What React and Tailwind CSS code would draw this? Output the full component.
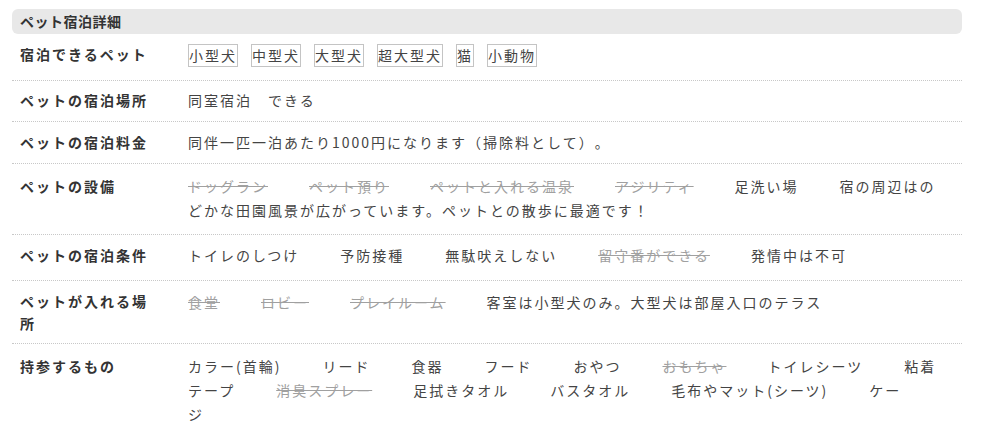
import React from 'react';

const font = { fontFamily: '"Noto Sans CJK JP", "Noto Sans", sans-serif' };

function Item({ text, off }) {
  return <span className={`mr-[41px] ${off ? 'text-[#a0a0a0] line-through' : ''}`}>{text}</span>;
}

function Row({ label, pad, labelClass = 'leading-6', children }) {
  return (
    <div className={`flex border-b border-dotted border-[#c8c8c8] pl-2 pr-3 ${pad}`}>
      <div className={`w-[168px] shrink-0 pr-[28px] font-bold text-[#333] ${labelClass}`}>{label}</div>
      <div className="flex-1 leading-6 text-[#444]">{children}</div>
    </div>
  );
}

export default function App() {
  const pets = ['小型犬', '中型犬', '大型犬', '超大型犬', '猫', '小動物'];

  const facilities = [
    { text: 'ドッグラン', off: true },
    { text: 'ペット預り', off: true },
    { text: 'ペットと入れる温泉', off: true },
    { text: 'アジリティ', off: true },
    { text: '足洗い場' },
    { text: '宿の周辺はのどかな田園風景が広がっています。ペットとの散歩に最適です！' },
  ];

  const conditions = [
    { text: 'トイレのしつけ' },
    { text: '予防接種' },
    { text: '無駄吠えしない' },
    { text: '留守番ができる', off: true },
    { text: '発情中は不可' },
  ];

  const places = [
    { text: '食堂', off: true },
    { text: 'ロビー', off: true },
    { text: 'プレイルーム', off: true },
    { text: '客室は小型犬のみ。大型犬は部屋入口のテラス' },
  ];

  const bring = [
    { text: 'カラー(首輪)' },
    { text: 'リード' },
    { text: '食器' },
    { text: 'フード' },
    { text: 'おやつ' },
    { text: 'おもちゃ', off: true },
    { text: 'トイレシーツ' },
    { text: '粘着テープ' },
    { text: '消臭スプレー', off: true },
    { text: '足拭きタオル' },
    { text: 'バスタオル' },
    { text: '毛布やマット(シーツ)' },
    { text: 'ケージ' },
  ];

  return (
    <div
      className="min-h-screen bg-white pt-[9px] text-[14px] tracking-[2px] [text-spacing-trim:space-all]"
      style={font}
    >
      <div className="ml-3 w-[950px]">
        {/* header */}
        <div className="h-[25px] rounded-md bg-[#e8e8e8] pl-2 leading-[25px] font-bold tracking-[0.5px] text-[#333]">
          ペット宿泊詳細
        </div>

        <Row label="宿泊できるペット" pad="pt-[8px] pb-[13px]">
          <div className="flex flex-wrap gap-x-[13px]">
            {pets.map(p => (
              <span key={p} className="mt-[2px] block h-[23px] border border-[#c4c4c4] leading-[21px]">
                {p}
              </span>
            ))}
          </div>
        </Row>

        <Row label="ペットの宿泊場所" pad="pt-[7px] pb-[9px]">
          同室宿泊　できる
        </Row>

        <Row label="ペットの宿泊料金" pad="pt-[8px] pb-[9px]">
          同伴一匹一泊あたり1000円になります（掃除料として）。
        </Row>

        <Row label="ペットの設備" pad="pt-[10px] pb-[12px]">
          {facilities.map(f => (
            <Item key={f.text} {...f} />
          ))}
        </Row>

        <Row label="ペットの宿泊条件" pad="pt-[8px] pb-[13px]">
          {conditions.map(f => (
            <Item key={f.text} {...f} />
          ))}
        </Row>

        <Row label="ペットが入れる場所" pad="pt-[9px] pb-[9px]" labelClass="leading-[22px]">
          {places.map(f => (
            <Item key={f.text} {...f} />
          ))}
        </Row>

        <div className="flex pl-2 pr-3 pt-[10px] pb-[12px]">
          <div className="w-[168px] shrink-0 pr-[28px] font-bold leading-6 text-[#333]">持参するもの</div>
          <div className="flex-1 leading-6 text-[#444]">
            {bring.map(f => (
              <Item key={f.text} {...f} />
            ))}
          </div>
        </div>
      </div>
    </div>
  );
}
